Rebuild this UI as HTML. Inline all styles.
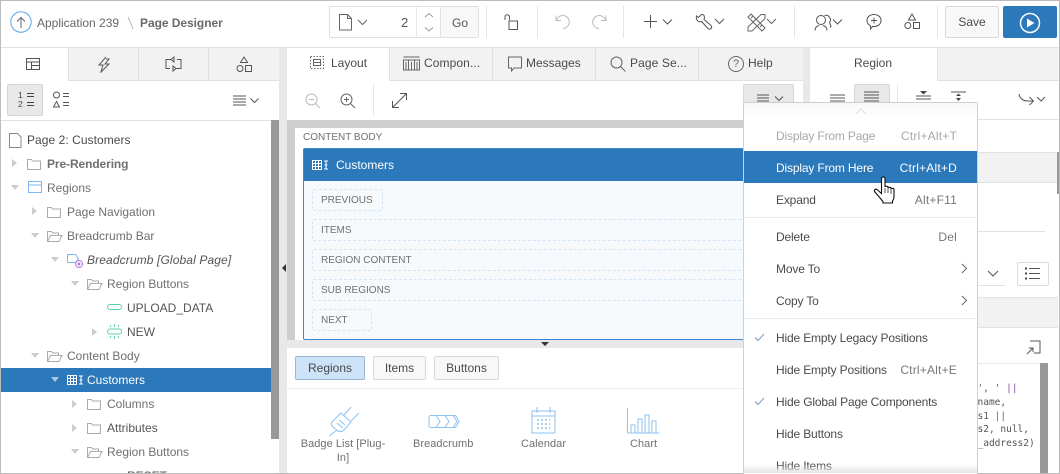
<!DOCTYPE html>
<html><head><meta charset="utf-8"><style>
html,body{margin:0;padding:0;overflow:hidden;width:1060px;height:474px}
body{background:#fff;position:relative;font-family:"Liberation Sans",sans-serif;font-size:12px;color:#4b4b4b}
#w{position:absolute;left:0;top:0;width:1060px;height:474px;overflow:hidden}
.a,.t,svg{position:absolute}
.t{white-space:nowrap;line-height:16px}
svg{fill:none;stroke:#555;stroke-width:1}
.tree{color:#707070}
.mi{font-size:12px;letter-spacing:-.16px;color:#4a4a4a}
.ms{font-size:12px;letter-spacing:.2px;color:#777}
.sc{letter-spacing:.05px;color:#707070;font-size:11px}
.dash{position:absolute;border:1px dashed #d3e6f8;height:20px;left:312px;color:#707070;font-size:10px;line-height:21px;padding-left:8px;border-radius:2px}
.btn{position:absolute;box-sizing:border-box;border:1px solid #d8d8d8;background:#f8f8f8;border-radius:2px;text-align:center;font-size:12px;line-height:22px;color:#4a4a4a}
</style></head><body><div id="w">
<!-- header -->
<svg style="left:10px;top:11px" width="22" height="22"><circle cx="11" cy="11" r="10.200" stroke="#5aa5e6"/><path d="M11 17V6.500M7 10.500l4-4 4 4" stroke="#666"/></svg>
<div class="t" style="left:37px;top:15px;color:#666">Application 239</div>
<svg style="left:127px;top:16px" width="8" height="14"><path d="M1 1l5 12" stroke="#bbb"/></svg>
<div class="t" style="left:140px;top:15px;font-weight:bold;color:#6a6a6a;letter-spacing:-.05px">Page Designer</div>
<div class="a" style="left:329px;top:6px;width:112px;height:32px;border:1px solid #e0e0e0;box-sizing:border-box;border-radius:2px"></div>
<div class="a" style="left:416px;top:7px;width:1px;height:30px;background:#e8e8e8"></div>
<div class="a" style="left:440px;top:6px;width:39px;height:32px;border:1px solid #e0e0e0;box-sizing:border-box;border-radius:2px;background:#f8f8f8"></div>
<svg style="left:339px;top:14px" width="14" height="17"><path d="M.5.5h8l4 4v11.500H.5zM8.500.5v4h4" stroke="#666"/></svg>
<svg style="left:357px;top:19px" width="12" height="8"><path d="M1 1l4.500 4.500L10 1" stroke="#666"/></svg>
<div class="t" style="left:401px;top:15px;font-size:13px;color:#555">2</div>
<svg style="left:423px;top:12px" width="12" height="22"><path d="M2 5l4-3.500 4 3.500M2 15.500l4 3.500 4-3.500" stroke="#999"/></svg>
<div class="t" style="left:452px;top:15px;color:#555">Go</div>
<div class="a" style="left:486px;top:6px;width:1px;height:32px;background:#e6e6e6"></div>
<svg style="left:504px;top:14px" width="15" height="17"><path d="M1 6V3a2.200 2.200 0 0 1 4.500 0v3M5 7h8.500v8.500H5z" stroke="#555"/></svg>
<div class="a" style="left:537px;top:6px;width:1px;height:32px;background:#e6e6e6"></div>
<svg style="left:555px;top:14px" width="16" height="16"><path d="M1 1.500v5h5M1.500 6.500A6.500 6.500 0 1 1 8 14.500" stroke="#bbb"/></svg>
<svg style="left:591px;top:14px" width="16" height="16"><path d="M15 1.500v5h-5M14.500 6.500A6.500 6.500 0 1 0 8 14.500" stroke="#bbb"/></svg>
<div class="a" style="left:623px;top:6px;width:1px;height:32px;background:#e6e6e6"></div>
<svg style="left:644px;top:15px" width="30" height="14"><path d="M6.500 0v13M0 6.500h13M19 4.500l4.500 4.500L28 4.500" stroke="#555"/></svg>
<svg style="left:695px;top:13px" width="30" height="19"><path d="M6.500 1.500L3.500 4.500 1.500 3C.5 6.500 3 9.500 6.500 8.500L13 15.500c1.500 2 5 -.5 3-3L9 6.500C10 3.500 9 1 6.500 1.500z" stroke="#555"/><path d="M20 6l4.500 4.500L29 6" stroke="#555"/></svg>
<svg style="left:747px;top:13px" width="30" height="19"><path d="M1 4l3-3 14 14-3 3zM14 1.500l4 0v4L5 18l-4 0v-4zM6 3L4 5M9 6L7 8M15 12l-2 2" stroke="#666"/><path d="M20 6l4.500 4.500L29 6" stroke="#666"/></svg>
<div class="a" style="left:794px;top:6px;width:1px;height:32px;background:#e6e6e6"></div>
<svg style="left:814px;top:14px" width="32" height="18"><circle cx="7" cy="6" r="4.500"/><path d="M1 16.500c0-3 2-4.500 4-5M13 16.500c0-3-2-4.500-4-5M10.500 1.500a4.500 4.500 0 0 1 5 7l1.500 4 -1 1" stroke="#555"/><path d="M19 5.500l4.500 4.500L28 5.500" stroke="#555"/></svg>
<svg style="left:866px;top:13px" width="16" height="18"><path d="M8 1.500c4 0 7 2.500 7 6s-3 6-7 6c-.5 0-1 0-1.500-.1L4.500 16v-3.200C2.500 11.700 1 9.800 1 7.500c0-3.500 3-6 7-6zM8 4.500v6M5 7.500h6" stroke="#555"/></svg>
<svg style="left:904px;top:13px" width="16" height="18"><path d="M8 1l3.500 6h-7zM9.500 9.500h6v6h-6z" stroke="#555"/><circle cx="3.800" cy="12.500" r="3" stroke="#555"/></svg>
<div class="a" style="left:937px;top:6px;width:1px;height:32px;background:#e6e6e6"></div>
<div class="btn" style="left:945px;top:6px;width:54px;height:32px;line-height:30px">Save</div>
<div class="a" style="left:1003px;top:6px;width:54px;height:32px;background:#2b78ba;border-radius:2px"></div>
<svg style="left:1019px;top:12px" width="22" height="22"><circle cx="11" cy="11" r="9.500" stroke="#fff" stroke-width="1.500"/><path d="M8 6.500l7.500 4.500-7.500 4.500z" fill="#fff" stroke="none"/></svg>
<div class="a" style="left:0;top:47px;width:1060px;height:1px;background:#e2e2e2"></div>

<!-- left tabs -->
<div class="a" style="left:69px;top:48px;width:210px;height:32px;background:#f2f2f2"></div>
<div class="a" style="left:1px;top:80px;width:278px;height:1px;background:#e0e0e0"></div>
<div class="a" style="left:1px;top:48px;width:67px;height:33px;background:#fff;border-right:1px solid #e0e0e0"></div>
<div class="a" style="left:138px;top:48px;width:1px;height:32px;background:#e0e0e0"></div>
<div class="a" style="left:208px;top:48px;width:1px;height:32px;background:#e0e0e0"></div>
<svg style="left:26px;top:58px" width="15" height="13"><path d="M.5.5h13v11H.5zM.5 4h13M5.500 4v7.500M5.500 7.500h8" stroke="#555"/></svg>
<svg style="left:97px;top:56px" width="15" height="17"><path d="M9 1L2 9h4L4 16l8-8H8l4-5H9" stroke="#555"/></svg>
<svg style="left:165px;top:56px" width="17" height="16"><path d="M6 3.500H1v9h4M11 12.500h5v-9h-4M6 3.500l3-2.500v5zM11 12.500l-3-2.500v5z" stroke="#555"/></svg>
<svg style="left:236px;top:56px" width="16" height="17"><path d="M8 1l3.500 5.500h-7zM9.500 9.500h6v6h-6z" stroke="#555"/><circle cx="4" cy="12.500" r="3" stroke="#555"/></svg>
<div class="a" style="left:7px;top:84px;width:36px;height:32px;background:#e8e8e8;border:1px solid #d4d4d4;box-sizing:border-box;border-radius:2px"></div>
<div class="t" style="left:18px;top:91px;font-size:8.500px;line-height:9px;color:#444">1<br>2</div>
<svg style="left:26px;top:92px" width="9" height="16"><path d="M1 1.500h7M1 4.500h7M1 10.500h7M1 13.500h7" stroke="#444"/></svg>
<svg style="left:53px;top:91px" width="17" height="18"><circle cx="3.500" cy="4" r="3"/><path d="M3.500 10.500l3 5.500H.5zM10 2.500h6M10 5.500h6M10 11.500h6M10 14.500h6" stroke="#555"/></svg>
<svg style="left:233px;top:95px" width="30" height="12"><path d="M0 1h13M0 4h13M0 7h13M0 10h13M17.500 3.500l4 4 4-4" stroke="#555"/></svg>
<div class="a" style="left:279px;top:48px;width:8px;height:426px;background:#e8e8e8"></div>
<svg style="left:282px;top:264px" width="5" height="8"><path d="M4 0v8L0 4z" fill="#333" stroke="none"/></svg>
<div class="a" style="left:1px;top:120px;width:278px;height:1px;background:#e2e2e2"></div>
<div class="a" style="left:271px;top:120px;width:8px;height:319px;background:#999"></div>

<!-- tree -->
<svg style="left:9px;top:133px" width="13" height="15"><path d="M.5.5h8l3.500 3.500v10.500H.5z" stroke="#888"/></svg>
<div class="t" style="left:27px;top:132px;color:#4a4a4a;letter-spacing:.05px">Page 2: Customers</div>
<svg style="left:11px;top:158px" width="8" height="10"><path d="M1 1l5 4-5 4z" fill="#ccc" stroke="none"/></svg>
<svg style="left:27px;top:158px" width="15" height="12"><path d="M.5 1.500h4l1 1.500h8v8.500H.5z" stroke="#aaa"/></svg>
<div class="t tree" style="left:47px;top:156px;font-weight:bold;letter-spacing:-.1px">Pre-Rendering</div>
<svg style="left:10px;top:184px" width="10" height="8"><path d="M1 1h8L5 6z" fill="#ccc" stroke="none"/></svg>
<svg style="left:28px;top:181px" width="15" height="13"><path d="M.5.500h13v11H.5zM.5 4h13" stroke="#7fb8ee"/></svg>
<div class="t tree" style="left:47px;top:180px">Regions</div>
<svg style="left:31px;top:206px" width="8" height="10"><path d="M1 1l5 4-5 4z" fill="#ccc" stroke="none"/></svg>
<svg style="left:47px;top:206px" width="15" height="12"><path d="M.5 1.500h4l1 1.500h8v8.500H.5z" stroke="#aaa"/></svg>
<div class="t tree" style="left:67px;top:204px">Page Navigation</div>
<svg style="left:30px;top:232px" width="10" height="8"><path d="M1 1h8L5 6z" fill="#ccc" stroke="none"/></svg>
<svg style="left:47px;top:230px" width="16" height="12"><path d="M.5 11.500v-10h4l1 1.500h6v2M.5 11.500h11.500l3-6H3.500z" stroke="#aaa"/></svg>
<div class="t tree" style="left:67px;top:228px">Breadcrumb Bar</div>
<svg style="left:50px;top:256px" width="10" height="8"><path d="M1 1h8L5 6z" fill="#ccc" stroke="none"/></svg>
<svg style="left:67px;top:254px" width="17" height="15"><path d="M.5.500h8l3 4-3 4h-8z" stroke="#7fb8ee"/><circle cx="12" cy="10" r="3.500" stroke="#b07cd8"/><circle cx="12" cy="10" r="1.500" fill="#b07cd8" stroke="none"/></svg>
<div class="t" style="left:87px;top:252px;font-style:italic;color:#555;letter-spacing:.12px">Breadcrumb [Global Page]</div>
<svg style="left:70px;top:280px" width="10" height="8"><path d="M1 1h8L5 6z" fill="#ccc" stroke="none"/></svg>
<svg style="left:87px;top:278px" width="16" height="12"><path d="M.5 11.500v-10h4l1 1.500h6v2M.5 11.500h11.500l3-6H3.500z" stroke="#aaa"/></svg>
<div class="t tree" style="left:107px;top:276px">Region Buttons</div>
<svg style="left:107px;top:304px" width="15" height="7"><rect x=".5" y=".5" width="14" height="5" rx="2.500" stroke="#5fd0a0"/></svg>
<div class="t" style="left:127px;top:300px;color:#555">UPLOAD_DATA</div>
<svg style="left:91px;top:327px" width="8" height="10"><path d="M1 1l5 4-5 4z" fill="#ccc" stroke="none"/></svg>
<svg style="left:107px;top:324px" width="15" height="15"><rect x=".5" y="5" width="14" height="5" rx="2.500" stroke="#5fd0a0"/><path d="M3 1l1 2M7.500 0v3M12 1l-1 2M3 14l1-2M7.500 15v-3M12 14l-1-2" stroke="#5fd0a0"/></svg>
<div class="t" style="left:127px;top:324px;color:#555">NEW</div>
<svg style="left:30px;top:352px" width="10" height="8"><path d="M1 1h8L5 6z" fill="#ccc" stroke="none"/></svg>
<svg style="left:47px;top:350px" width="16" height="12"><path d="M.5 11.500v-10h4l1 1.500h6v2M.5 11.500h11.500l3-6H3.500z" stroke="#aaa"/></svg>
<div class="t tree" style="left:67px;top:348px">Content Body</div>
<div class="a" style="left:1px;top:368px;width:270px;height:24px;background:#2b78ba"></div>
<svg style="left:50px;top:376px" width="10" height="8"><path d="M1 1h8L5 6z" fill="#a8c8e6" stroke="none"/></svg>
<svg style="left:67px;top:375px" width="17" height="10"><path d="M.5.500h9v9h-9zM.5 3.500h9M.5 6.500h9M3.500.5v9M6.500.5v9M12 1h4M12 9h4M14 1v8M12.500 5h3" stroke="#fff"/></svg>
<div class="t" style="left:87px;top:372px;color:#fff">Customers</div>
<svg style="left:71px;top:399px" width="8" height="10"><path d="M1 1l5 4-5 4z" fill="#ccc" stroke="none"/></svg>
<svg style="left:87px;top:398px" width="15" height="12"><path d="M.5 1.500h4l1 1.500h8v8.500H.5z" stroke="#aaa"/></svg>
<div class="t tree" style="left:107px;top:396px">Columns</div>
<svg style="left:71px;top:423px" width="8" height="10"><path d="M1 1l5 4-5 4z" fill="#ccc" stroke="none"/></svg>
<svg style="left:87px;top:422px" width="15" height="12"><path d="M.5 1.500h4l1 1.500h8v8.500H.5z" stroke="#aaa"/></svg>
<div class="t" style="left:107px;top:420px;color:#555">Attributes</div>
<svg style="left:70px;top:448px" width="10" height="8"><path d="M1 1h8L5 6z" fill="#ccc" stroke="none"/></svg>
<svg style="left:87px;top:446px" width="16" height="12"><path d="M.5 11.500v-10h4l1 1.500h6v2M.5 11.500h11.500l3-6H3.500z" stroke="#aaa"/></svg>
<div class="t tree" style="left:107px;top:444px">Region Buttons</div>
<div class="t" style="left:127px;top:468px;color:#555">RESET</div>

<!-- center tabs -->
<div class="a" style="left:287px;top:48px;width:516px;height:32px;background:#f2f2f2"></div>
<div class="a" style="left:287px;top:80px;width:516px;height:1px;background:#e0e0e0"></div>
<div class="a" style="left:287px;top:48px;width:102px;height:33px;background:#fff;border-right:1px solid #e0e0e0"></div>
<div class="a" style="left:492px;top:48px;width:1px;height:32px;background:#e0e0e0"></div>
<div class="a" style="left:595px;top:48px;width:1px;height:32px;background:#e0e0e0"></div>
<div class="a" style="left:698px;top:48px;width:1px;height:32px;background:#e0e0e0"></div>
<svg style="left:310px;top:56px" width="15" height="14"><path d="M.5.5h13v12H.5z" stroke="#666" stroke-dasharray="1.500 1.500"/><path d="M3.500 3.500h7v6h-7zM3.500 6.500h7" stroke="#666"/></svg>
<div class="t" style="left:331px;top:55px;color:#4a4a4a">Layout</div>
<svg style="left:403px;top:56px" width="18" height="15"><path d="M.5 1h16M.5 4h16v10H.5zM5.500 4v10M11.500 4v10M3 6v8M8.500 6v8M14 6v8" stroke="#666"/></svg>
<div class="t" style="left:424px;top:55px;color:#4a4a4a;letter-spacing:.1px">Compon...</div>
<svg style="left:508px;top:56px" width="15" height="17"><path d="M.5 1h13v11H6l-2.500 3v-3h-3z" stroke="#666"/></svg>
<div class="t" style="left:526px;top:55px;color:#4a4a4a">Messages</div>
<svg style="left:610px;top:56px" width="16" height="16"><circle cx="6.500" cy="6.500" r="5.500" stroke="#666"/><path d="M10.500 10.500l5 5" stroke="#666"/></svg>
<div class="t" style="left:630px;top:55px;color:#4a4a4a;letter-spacing:.1px">Page Se...</div>
<svg style="left:727px;top:55px" width="18" height="18"><circle cx="9" cy="9" r="7.500" stroke="#666"/></svg>
<div class="t" style="left:733px;top:56px;color:#666;font-size:11px">?</div>
<div class="t" style="left:748px;top:55px;color:#4a4a4a">Help</div>
<!-- center toolbar -->
<svg style="left:305px;top:93px" width="16" height="16"><circle cx="6.500" cy="6.500" r="5.500" stroke="#bbb"/><path d="M4 6.500h5M10.500 10.500l4.500 4.500" stroke="#bbb"/></svg>
<svg style="left:340px;top:93px" width="16" height="16"><circle cx="6.500" cy="6.500" r="5.500" stroke="#666"/><path d="M4 6.500h5M6.500 4v5M10.500 10.500l4.500 4.500" stroke="#666"/></svg>
<div class="a" style="left:373px;top:84px;width:1px;height:32px;background:#e6e6e6"></div>
<svg style="left:392px;top:93px" width="15" height="15"><path d="M.5 14.500l14-14M8 .5h6.500V7M.5 8v6.500H7" stroke="#555"/></svg>
<div class="a" style="left:743px;top:84px;width:51px;height:32px;background:#e8e8e8;border:1px solid #d8d8d8;box-sizing:border-box;border-radius:2px"></div>
<svg style="left:757px;top:94px" width="28" height="9"><path d="M0 1h12M0 4h12M0 7h12M18 2.500l4 4 4-4" stroke="#555"/></svg>
<!-- canvas -->
<div class="a" style="left:287px;top:120px;width:516px;height:220px;background:#cecece"></div>
<div class="a" style="left:295px;top:128px;width:508px;height:212px;background:#fff"></div>
<div class="t" style="left:303px;top:130px;font-size:10px;color:#707070">CONTENT BODY</div>
<div class="a" style="left:303px;top:148px;width:500px;height:192px;box-sizing:border-box;background:#f6fafd;border:1px solid #3b8ad0;border-right:0;border-radius:2px 0 0 2px"></div>
<div class="a" style="left:304px;top:149px;width:499px;height:32px;background:#2b78ba"></div>
<svg style="left:312px;top:160px" width="17" height="10"><path d="M.5.500h9v9h-9zM.5 3.500h9M.5 6.500h9M3.500.5v9M6.500.5v9M12 1h4M12 9h4M14 1v8M12.500 5h3" stroke="#fff"/></svg>
<div class="t" style="left:336px;top:157px;color:#fff">Customers</div>
<div class="dash" style="top:189px;width:61px">PREVIOUS</div>
<div class="dash" style="top:219px;width:440px">ITEMS</div>
<div class="dash" style="top:249px;width:440px">REGION CONTENT</div>
<div class="dash" style="top:279px;width:440px">SUB REGIONS</div>
<div class="dash" style="top:309px;width:50px">NEXT</div>
<!-- bottom gallery -->
<div class="a" style="left:287px;top:340px;width:516px;height:8px;background:#e8e8e8"></div>
<svg style="left:541px;top:342px" width="8" height="5"><path d="M0 0h8L4 4z" fill="#333" stroke="none"/></svg>
<div class="btn" style="left:295px;top:356px;width:70px;height:24px;background:#cce3f8;border-color:#9ab8d4">Regions</div>
<div class="btn" style="left:373px;top:356px;width:53px;height:24px">Items</div>
<div class="btn" style="left:434px;top:356px;width:65px;height:24px">Buttons</div>
<div class="a" style="left:287px;top:388px;width:456px;height:1px;background:#eee"></div>
<svg style="left:328px;top:406px" width="32" height="30"><g stroke="#8ec2f2"><path d="M4 16l9-9 10 9-7 8c-2 2-4 2-6 1l-5-4c-2-2-2-3-1-5zM16 9l7-8M23 15l8-8M9 24l-8 6M11 14l6 5M9 17l6 5"/></g></svg>
<svg style="left:428px;top:414px" width="32" height="15"><path d="M3 1.500h24.500l3.500 6-3.500 6H3a2 2 0 0 1-2-2v-8a2 2 0 0 1 2-2zM8 1.500l4 6-4 6M17 1.500l4 6-4 6M25 1.500l4 6-4 6" stroke="#8ec2f2"/></svg>
<svg style="left:531px;top:406px" width="25" height="29"><path d="M1 5h23v22H1zM1 10h23M6 1v6M19 1v6" stroke="#8ec2f2"/><path d="M6 14h13M6 18h13M6 22h13" stroke="#8ec2f2" stroke-width="1.500" stroke-dasharray="2 2"/></svg>
<svg style="left:627px;top:408px" width="33" height="26"><path d="M.5 0v25h32M4 25V17h4v8M11 25V11h4v14M18 25V7h4v18M25 25V13h4v12" stroke="#8ec2f2"/></svg>
<div class="t sc" style="left:292px;top:437px;line-height:14px;width:102px;text-align:center;left:292px">Badge List [Plug-<br>In]</div>
<div class="t sc" style="left:413px;top:437px;line-height:14px">Breadcrumb</div>
<div class="t sc" style="left:521px;top:437px;line-height:14px">Calendar</div>
<div class="t sc" style="left:630px;top:437px;line-height:14px">Chart</div>

<!-- right panel -->
<div class="a" style="left:803px;top:48px;width:7px;height:426px;background:#e8e8e8"></div>
<div class="a" style="left:810px;top:48px;width:250px;height:32px;background:#f2f2f2"></div>
<div class="a" style="left:810px;top:80px;width:250px;height:1px;background:#e0e0e0"></div>
<div class="a" style="left:810px;top:48px;width:127px;height:33px;background:#fff;border-right:1px solid #e0e0e0"></div>
<div class="t" style="left:854px;top:55px;color:#4a4a4a">Region</div>
<svg style="left:829px;top:94px" width="17" height="9"><path d="M1 1h15M1 4h15M1 7h15" stroke="#555"/></svg>
<div class="a" style="left:854px;top:84px;width:36px;height:32px;background:#e8e8e8;border:1px solid #d8d8d8;box-sizing:border-box;border-radius:2px"></div>
<svg style="left:863px;top:91px" width="17" height="12"><path d="M1 1h15M1 4h15M1 7h15M1 10h15" stroke="#555"/></svg>
<div class="a" style="left:897px;top:84px;width:1px;height:32px;background:#e6e6e6"></div>
<svg style="left:915px;top:91px" width="17" height="12"><path d="M1 5h15M1 8h15" stroke="#555"/><path d="M5 0h7L8.500 3.500z" fill="#444" stroke="none"/></svg>
<svg style="left:950px;top:91px" width="17" height="13"><path d="M1 1h15" stroke="#555"/><path d="M6 5h5L8.500 2.500zM6 7h5L8.500 10z" fill="#444" stroke="none"/></svg>
<svg style="left:1018px;top:93px" width="30" height="15"><path d="M1 1c1 5 4 7 9 7h5M11.500 4l4 4-4 4" stroke="#555"/><path d="M19 4l4 4 4-4" stroke="#555"/></svg>
<div class="a" style="left:977px;top:119px;width:83px;height:1px;background:#e2e2e2"></div>
<div class="a" style="left:977px;top:152px;width:81px;height:29px;background:#f2f2f2;border-top:1px solid #e2e2e2;border-bottom:1px solid #e2e2e2"></div>
<div class="a" style="left:1057px;top:152px;width:3px;height:42px;background:#999"></div>
<div class="a" style="left:977px;top:231px;width:68px;height:1px;background:#e2e2e2"></div>
<svg style="left:987px;top:270px" width="12" height="8"><path d="M1 1l5 5 5-5" stroke="#555"/></svg>
<div class="a" style="left:977px;top:285px;width:28px;height:1px;background:#e2e2e2"></div>
<div class="a" style="left:1017px;top:262px;width:32px;height:24px;border:1px solid #ddd;box-sizing:border-box;border-radius:2px"></div>
<svg style="left:1024px;top:267px" width="17" height="14"><path d="M5 1.500h11M5 6.500h11M5 11.500h11" stroke="#555"/><path d="M1 1.500h2M1 6.500h2M1 11.500h2" stroke="#444" stroke-width="2"/></svg>
<div class="a" style="left:977px;top:297px;width:81px;height:29px;background:#f2f2f2;border-top:1px solid #e2e2e2;border-bottom:1px solid #e2e2e2"></div>
<svg style="left:1026px;top:340px" width="15" height="15"><path d="M4 1h10v12H8M1 14l6-6M3 8h4v4" stroke="#555"/></svg>
<div class="a" style="left:977px;top:363px;width:63px;height:1px;background:#e8e8e8"></div>
<div class="a" style="left:1040px;top:363px;width:8px;height:111px;background:#999"></div>
<div class="t" style="left:977.500px;top:382px;font-family:'DejaVu Sans Mono',monospace;font-size:9.500px;line-height:13.800px;color:#555;white-space:pre">', ' <span style="color:#8a4aa8">||</span>
name,
s1 <span style="color:#8a4aa8">||</span>
s2, null,
_address2)</div>
<div class="a" style="left:0;top:473px;width:1060px;height:1px;background:#bbb"></div>
<div class="a" style="left:0;top:0;width:1060px;height:1px;background:#bbb"></div>
<div class="a" style="left:0;top:0;width:1px;height:474px;background:#bbb"></div>
<div class="a" style="left:1059px;top:0;width:1px;height:474px;background:#bbb"></div>

<!-- menu -->
<div class="a" style="left:743px;top:102px;width:235px;height:372px;background:#fff;border:1px solid #d0d0d0;border-bottom:0;box-sizing:border-box;border-radius:2px 2px 0 0"></div>
<div class="a" style="left:744px;top:103px;width:233px;height:17px;background:linear-gradient(#f8f8f8,#fff)"></div>
<svg style="left:855px;top:108px" width="12" height="7"><path d="M1 6l5-5 5 5" stroke="#ddd"/></svg>
<div class="t mi" style="left:776px;top:128px;color:#a8a8a8">Display From Page</div>
<div class="t ms" style="right:103px;top:128px;color:#a8a8a8">Ctrl+Alt+T</div>
<div class="a" style="left:744px;top:151px;width:233px;height:32px;background:#2b78ba"></div>
<div class="t mi" style="left:776px;top:160px;color:#fff">Display From Here</div>
<div class="t ms" style="right:103px;top:160px;color:#fff">Ctrl+Alt+D</div>
<div class="t mi" style="left:776px;top:192px">Expand</div>
<div class="t ms" style="right:103px;top:192px">Alt+F11</div>
<div class="a" style="left:744px;top:217px;width:233px;height:1px;background:#e8e8e8"></div>
<div class="t mi" style="left:776px;top:229px">Delete</div>
<div class="t ms" style="right:103px;top:229px">Del</div>
<div class="t mi" style="left:776px;top:261px">Move To</div>
<svg style="left:961px;top:263px" width="7" height="12"><path d="M1 1l4.500 4.500L1 10" stroke="#666"/></svg>
<div class="t mi" style="left:776px;top:293px">Copy To</div>
<svg style="left:961px;top:295px" width="7" height="12"><path d="M1 1l4.500 4.500L1 10" stroke="#666"/></svg>
<div class="a" style="left:744px;top:318px;width:233px;height:1px;background:#e8e8e8"></div>
<svg style="left:754px;top:333px" width="11" height="9"><path d="M1 4.500l3 3 6-6.500" stroke="#7a9cba"/></svg>
<div class="t mi" style="left:776px;top:330px">Hide Empty Legacy Positions</div>
<div class="t mi" style="left:776px;top:362px">Hide Empty Positions</div>
<div class="t ms" style="right:103px;top:362px">Ctrl+Alt+E</div>
<svg style="left:754px;top:397px" width="11" height="9"><path d="M1 4.500l3 3 6-6.500" stroke="#7a9cba"/></svg>
<div class="t mi" style="left:776px;top:394px">Hide Global Page Components</div>
<div class="t mi" style="left:776px;top:426px">Hide Buttons</div>
<div class="t mi" style="left:776px;top:458px">Hide Items</div>
<div class="a" style="left:744px;top:464px;width:233px;height:9px;background:linear-gradient(rgba(235,235,235,0),#e4e4e4)"></div>
<!-- hand cursor -->
<svg style="left:873px;top:175px" width="24" height="30" viewBox="0 0 24 30"><path d="M8.500 3.500c0-2 3.500-2 3.500 0V12c0-1 3-1 3 0v1c0-1 3-1 3 .5v.5c0-1 3-1 3 .5V22c0 2-1 3-1.500 4v2H10v-1.500L2 17c-1.500-2 .5-3.500 2-2.500l4.500 4z" fill="#fff" stroke="#111" stroke-width="1.100"/><path d="M12 13v5M15 13v5M18 14v5" stroke="#555"/></svg>
</div></body></html>
